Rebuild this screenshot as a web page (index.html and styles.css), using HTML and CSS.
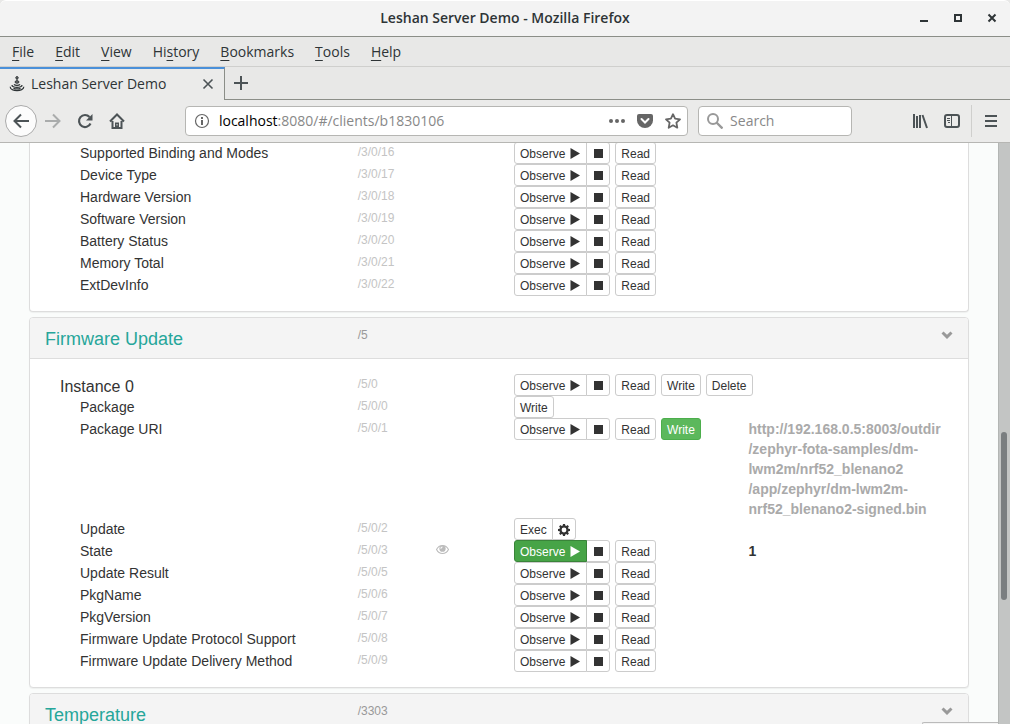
FILE: index.html
```html
<!DOCTYPE html>
<html lang="en">
<head>
<meta charset="utf-8">
<title>Leshan Server Demo</title>
<link rel="stylesheet" href="styles.css">
</head>
<body>
<svg class="sprite" aria-hidden="true">
  <symbol id="play" viewBox="0 0 12 12"><path d="M1.500 0L11 5.500L1.500 11Z"/></symbol>
  <symbol id="stop" viewBox="0 0 12 12"><path d="M2 1h9v9H2Z"/></symbol>
  <symbol id="cog" viewBox="0 0 12 12"><path fill-rule="evenodd" d="M5 0h2l.3 1.6 1 .4L9.600 1.100 10.900 2.400 10 3.700l.4 1L12 5v2l-1.600.3-.4 1 .9 1.300-1.300 1.300L8.300 10l-1 .4L7 12H5l-.3-1.600-1-.4-1.300.9-1.300-1.300L2 8.300l-.4-1L0 7V5l1.600-.3.4-1L1.100 2.400 2.400 1.100 3.700 2l1-.4ZM6 3.600a2.400 2.400 0 1 0 0 4.800 2.400 2.400 0 0 0 0-4.800Z"/></symbol>
  <symbol id="chevron" viewBox="0 0 12 12"><path d="M.5 5.500L2.500 3.500 6 6.800 9.500 3.500 11.500 5.500 6 11Z"/></symbol>
</svg>

<header class="chrome">
  <div class="titlebar">
    <span class="window-title">Leshan Server Demo - Mozilla Firefox</span>
    <div class="window-controls">
      <button aria-label="Minimize"><svg width="10" height="10"><path d="M1 7h8v2H1z"/></svg></button>
      <button aria-label="Maximize"><svg width="10" height="10"><path fill-rule="evenodd" d="M1 1h8v8H1zM3 3v4h4V3z"/></svg></button>
      <button aria-label="Close"><svg width="10" height="10"><path d="M1.500 1.500l7 7m0-7l-7 7" stroke="#2e3436" stroke-width="2"/></svg></button>
    </div>
  </div>
  <nav class="menubar">
    <button><u>F</u>ile</button><button><u>E</u>dit</button><button><u>V</u>iew</button><button>Hi<u>s</u>tory</button><button><u>B</u>ookmarks</button><button><u>T</u>ools</button><button><u>H</u>elp</button>
  </nav>
  <div class="tabs">
    <div class="tab">
      <svg class="favicon" width="16" height="16" viewBox="0 0 16 16" fill="none" stroke="#2e3436"><circle cx="8" cy="1.800" r="1.200" fill="#777"/><path d="M8 3v2"/><ellipse cx="8" cy="6" rx="2" ry="1.200" fill="#777"/><path d="M5 8.300c1 1.400 5 1.400 6 0M3 9c-.5 3.200 10.500 3.200 10 0M1.200 10.800c0 5 13.600 5 13.600 0M4.500 12.200c1.500 1 5.500 1 7 0" stroke-width="1.200"/></svg>
      <span class="tab-title">Leshan Server Demo</span>
      <button class="tab-close" aria-label="Close tab"><svg width="12" height="12"><path d="M1.500 1.500l9 9m0-9l-9 9" stroke="#4c5356" stroke-width="1.600"/></svg></button>
    </div>
    <button class="new-tab" aria-label="New tab"><svg width="14" height="14"><path d="M7 0v14M0 7h14" stroke="#4c5356" stroke-width="2"/></svg></button>
  </div>
  <div class="toolbar">
    <button class="back" aria-label="Back"><svg width="16" height="16" fill="none" stroke="#4c5356" stroke-width="2"><path d="M8 1.500L1.500 8 8 14.500M1.500 8H16"/></svg></button>
    <button class="tool" aria-label="Forward"><svg width="16" height="16" fill="none" stroke="#aaacac" stroke-width="2"><path d="M8 1.500L14.500 8 8 14.500M0 8h14.500"/></svg></button>
    <button class="tool" aria-label="Reload"><svg width="16" height="16" fill="none" stroke="#4c5356" stroke-width="2.200"><path d="M13.500 10.500A6 6 0 1 1 12.500 4"/><path d="M15.500 1v6.500H9z" fill="#4c5356" stroke="none"/></svg></button>
    <button class="tool" aria-label="Home"><svg width="16" height="16"><path d="M1 8.500L8 1.500l7 7M3.500 8v7h9V8" fill="none" stroke="#4c5356" stroke-width="2"/><path d="M6 15V9.500h4V15z" fill="#4c5356"/><path d="M8 11v1.500" stroke="#ddd"/></svg></button>
    <span class="spacer"></span>
    <div class="urlbar">
      <svg width="16" height="16"><circle cx="8" cy="8" r="6.500" fill="none" stroke="#666" stroke-width="1.200"/><path d="M7 7h2v5H7zM7 4h2v2H7z" fill="#666"/></svg>
      <a class="address" href="#/clients/b1830106"><b>localhost</b>:8080/#/clients/b1830106</a>
      <button aria-label="Page actions"><svg width="16" height="16" fill="#666"><circle cx="2" cy="8" r="2"/><circle cx="8" cy="8" r="2"/><circle cx="14" cy="8" r="2"/></svg></button>
      <button aria-label="Save to Pocket"><svg width="16" height="16"><path d="M2 1h12q2 0 2 2v4.500a8 7.500 0 0 1-16 0V3q0-2 2-2z" fill="#666"/><path d="M4.500 6L8 9.500 11.500 6" fill="none" stroke="#fff" stroke-width="2" stroke-linecap="round"/></svg></button>
      <button aria-label="Bookmark"><svg width="16" height="16"><path d="M8 1.200l2.100 4.500 4.900.6-3.600 3.400.9 5L8 12.300l-4.300 2.400.9-5L1 6.300l4.900-.6z" fill="none" stroke="#666" stroke-width="1.800" stroke-linejoin="round"/></svg></button>
    </div>
    <label class="search">
      <svg width="16" height="16" fill="none" stroke="#999" stroke-width="2"><circle cx="6" cy="6" r="5"/><path d="M9.500 9.500l6 6" stroke-width="2.400"/></svg>
      <input type="text" placeholder="Search" aria-label="Search">
    </label>
    <span class="spacer"></span>
    <button class="tool" aria-label="Library"><svg width="16" height="16" fill="none" stroke="#4c5356" stroke-width="2"><path d="M2 1v14M5 3v12M8 2v13M10.500 2l4.500 13"/></svg></button>
    <button class="tool" aria-label="Sidebars"><svg width="16" height="16" fill="none" stroke="#4c5356"><rect x="1" y="2" width="14" height="12" rx="2" stroke-width="2"/><path d="M7.500 2v12M3 5.500h3M3 7.500h3M4 9.500h2"/></svg></button>
    <button class="tool menu" aria-label="Open menu"><svg width="16" height="16" stroke="#4c5356" stroke-width="2"><path d="M2 3h12M2 8h12M2 13h12"/></svg></button>
  </div>
</header>

<div class="viewport">
  <main class="page">
    <section class="panel continued">
      <div class="panel-body">
        <div class="row"><span class="name">Supported Binding and Modes</span><span class="path">/3/0/16</span><span></span><div class="actions"><div class="group"><button class="btn">Observe <svg><use href="#play"/></svg></button><button class="btn" aria-label="Stop"><svg><use href="#stop"/></svg></button></div><button class="btn">Read</button></div></div>
        <div class="row"><span class="name">Device Type</span><span class="path">/3/0/17</span><span></span><div class="actions"><div class="group"><button class="btn">Observe <svg><use href="#play"/></svg></button><button class="btn" aria-label="Stop"><svg><use href="#stop"/></svg></button></div><button class="btn">Read</button></div></div>
        <div class="row"><span class="name">Hardware Version</span><span class="path">/3/0/18</span><span></span><div class="actions"><div class="group"><button class="btn">Observe <svg><use href="#play"/></svg></button><button class="btn" aria-label="Stop"><svg><use href="#stop"/></svg></button></div><button class="btn">Read</button></div></div>
        <div class="row"><span class="name">Software Version</span><span class="path">/3/0/19</span><span></span><div class="actions"><div class="group"><button class="btn">Observe <svg><use href="#play"/></svg></button><button class="btn" aria-label="Stop"><svg><use href="#stop"/></svg></button></div><button class="btn">Read</button></div></div>
        <div class="row"><span class="name">Battery Status</span><span class="path">/3/0/20</span><span></span><div class="actions"><div class="group"><button class="btn">Observe <svg><use href="#play"/></svg></button><button class="btn" aria-label="Stop"><svg><use href="#stop"/></svg></button></div><button class="btn">Read</button></div></div>
        <div class="row"><span class="name">Memory Total</span><span class="path">/3/0/21</span><span></span><div class="actions"><div class="group"><button class="btn">Observe <svg><use href="#play"/></svg></button><button class="btn" aria-label="Stop"><svg><use href="#stop"/></svg></button></div><button class="btn">Read</button></div></div>
        <div class="row"><span class="name">ExtDevInfo</span><span class="path">/3/0/22</span><span></span><div class="actions"><div class="group"><button class="btn">Observe <svg><use href="#play"/></svg></button><button class="btn" aria-label="Stop"><svg><use href="#stop"/></svg></button></div><button class="btn">Read</button></div></div>
      </div>
    </section>

    <section class="panel">
      <div class="panel-heading"><h2><a href="#firmware">Firmware Update</a></h2><span class="path">/5</span><button class="toggle" aria-label="Toggle"><svg><use href="#chevron"/></svg></button></div>
      <div class="panel-body" id="firmware">
        <div class="row"><span class="name instance">Instance 0</span><span class="path">/5/0</span><span></span><div class="actions"><div class="group"><button class="btn">Observe <svg><use href="#play"/></svg></button><button class="btn" aria-label="Stop"><svg><use href="#stop"/></svg></button></div><button class="btn">Read</button><button class="btn">Write</button><button class="btn">Delete</button></div></div>
        <div class="row"><span class="name">Package</span><span class="path">/5/0/0</span><span></span><div class="actions"><button class="btn">Write</button></div></div>
        <div class="row"><span class="name">Package URI</span><span class="path">/5/0/1</span><span></span><div class="actions"><div class="group"><button class="btn">Observe <svg><use href="#play"/></svg></button><button class="btn" aria-label="Stop"><svg><use href="#stop"/></svg></button></div><button class="btn">Read</button><button class="btn success">Write</button></div><span class="value muted">http://192.168.0.5:8003/outdir<wbr>/zephyr-fota-samples/dm-lwm2m/nrf52_blenano2<wbr>/app/zephyr/dm-lwm2m-nrf52_blenano2-signed.bin</span></div>
        <div class="row"><span class="name">Update</span><span class="path">/5/0/2</span><span></span><div class="actions"><div class="group"><button class="btn">Exec</button><button class="btn" aria-label="Exec parameters"><svg><use href="#cog"/></svg></button></div></div></div>
        <div class="row"><span class="name">State</span><span class="path">/5/0/3</span><span class="watch"><svg viewBox="0 0 12 12" fill="none" stroke="#bbb"><path d="M.5 6C3 1 9 1 11.500 6C9 11 3 11 .5 6Z"/><circle cx="6" cy="5.200" r="2.900" fill="#bbb" stroke="none"/><path d="M4.500 5.200Q4.500 3.700 6 3.700" stroke="#fff"/></svg></span><div class="actions"><div class="group"><button class="btn success active">Observe <svg><use href="#play"/></svg></button><button class="btn" aria-label="Stop"><svg><use href="#stop"/></svg></button></div><button class="btn">Read</button></div><span class="value">1</span></div>
        <div class="row"><span class="name">Update Result</span><span class="path">/5/0/5</span><span></span><div class="actions"><div class="group"><button class="btn">Observe <svg><use href="#play"/></svg></button><button class="btn" aria-label="Stop"><svg><use href="#stop"/></svg></button></div><button class="btn">Read</button></div></div>
        <div class="row"><span class="name">PkgName</span><span class="path">/5/0/6</span><span></span><div class="actions"><div class="group"><button class="btn">Observe <svg><use href="#play"/></svg></button><button class="btn" aria-label="Stop"><svg><use href="#stop"/></svg></button></div><button class="btn">Read</button></div></div>
        <div class="row"><span class="name">PkgVersion</span><span class="path">/5/0/7</span><span></span><div class="actions"><div class="group"><button class="btn">Observe <svg><use href="#play"/></svg></button><button class="btn" aria-label="Stop"><svg><use href="#stop"/></svg></button></div><button class="btn">Read</button></div></div>
        <div class="row"><span class="name">Firmware Update Protocol Support</span><span class="path">/5/0/8</span><span></span><div class="actions"><div class="group"><button class="btn">Observe <svg><use href="#play"/></svg></button><button class="btn" aria-label="Stop"><svg><use href="#stop"/></svg></button></div><button class="btn">Read</button></div></div>
        <div class="row"><span class="name">Firmware Update Delivery Method</span><span class="path">/5/0/9</span><span></span><div class="actions"><div class="group"><button class="btn">Observe <svg><use href="#play"/></svg></button><button class="btn" aria-label="Stop"><svg><use href="#stop"/></svg></button></div><button class="btn">Read</button></div></div>
      </div>
    </section>

    <section class="panel">
      <div class="panel-heading"><h2><a href="#temperature">Temperature</a></h2><span class="path">/3303</span><button class="toggle" aria-label="Toggle"><svg><use href="#chevron"/></svg></button></div>
    </section>
    <div class="status-popup"></div>
  </main>
  <div class="scrollbar"><div class="thumb"></div></div>
</div>
</body>
</html>
```
FILE: styles.css
```css
* { box-sizing: border-box; }

body {
  margin: 0;
  height: 100vh;
  display: flex;
  flex-direction: column;
  overflow: hidden;
  background: #fafcfb;
  color: #333;
  font: 14px/20px "Liberation Sans", Arial, sans-serif;
}

button {
  display: inline-flex;
  align-items: center;
  justify-content: center;
  margin: 0;
  padding: 0;
  border: 0;
  background: none;
  color: inherit;
  font: inherit;
}

svg { display: block; flex: none; }
.sprite { position: absolute; width: 0; height: 0; }

/* Browser window */
.chrome {
  position: relative;
  z-index: 1;
  flex: none;
  margin-bottom: -1px;
  border-bottom: 1px solid #b6b6b3;
  background: #e8e8e7;
  color: #2e3436;
  font-family: "Open Sans", "Noto Sans", sans-serif;
}

.titlebar {
  display: grid;
  grid-template-columns: 1fr auto 1fr;
  align-items: center;
  height: 37px;
  padding-bottom: 2px;
  border-top: 1px solid #fff;
  border-bottom: 1px solid #8b8e88;
  border-radius: 6px 6px 0 0;
  background: #f3f3f3;
}
.window-title { grid-column: 2; font-weight: 600; }
.window-controls {
  display: flex;
  justify-content: flex-end;
  gap: 24px;
  padding-right: 13px;
  fill: #2e3436;
}

.menubar {
  display: flex;
  gap: 21px;
  height: 30px;
  padding: 0 12px;
  border-bottom: 1px solid #cfcfcd;
}
.menubar button { display: block; }
.menubar u { text-underline-offset: 3px; }

.tabs {
  display: flex;
  height: 33px;
}
.tab {
  display: flex;
  align-items: center;
  width: 225px;
  padding: 0 10px 2px 9px;
  border-top: 2px solid #4a90d9;
  border-right: 1px solid #8b8e88;
  background: #ebebea;
}
.tab-title { flex: 1; margin-left: 6px; }
.new-tab {
  flex: 1;
  justify-content: flex-start;
  padding-left: 9px;
  border-bottom: 1px solid #8b8e88;
}

.toolbar {
  display: flex;
  align-items: center;
  height: 42px;
  padding: 0 0 0 5px;
  background: #ebebea;
}
.tool { width: 32px; height: 32px; }
.back {
  width: 32px;
  height: 32px;
  border: 1px solid #aaa;
  border-radius: 50%;
  background: #fcfcfc;
}
.menu {
  width: 39px;
  margin-left: 3px;
  border-left: 1px solid #cfcfcd;
}
.spacer { flex: 1; }
.urlbar, .search {
  display: flex;
  align-items: center;
  height: 30px;
  border: 1px solid #b6b6b3;
  border-radius: 4px;
  background: #fff;
}
.urlbar {
  flex: 10 1 24px;
  gap: 12px;
  margin-right: 10px;
  padding: 0 6px 0 8px;
}
.toolbar .spacer { flex: 1 1 4px; }
.address {
  flex: 1;
  margin-left: -3px;
  color: #888;
  text-decoration: none;
}
.address b { color: #000; font-weight: 400; }
.search { width: 154px; gap: 7px; padding: 0 8px; }
.search input {
  width: 100%;
  min-width: 0;
  padding: 0;
  border: 0;
  outline: 0;
  background: none;
  font: inherit;
}
.search input::placeholder { color: #888; opacity: 1; }

/* Page */
.viewport {
  display: flex;
  flex: 1;
  min-height: 0;
}
.page {
  position: relative;
  flex: 1;
  padding: 0 29px;
  overflow: hidden;
}
.scrollbar {
  width: 12px;
  padding: 290px 3px 0 2px;
  border-left: 1px solid #b3b6b4;
  background: #c3c5c4;
}
.thumb {
  height: 168px;
  border-radius: 3px;
  background: #7a7e80;
}

.panel {
  margin-bottom: 5px;
  border: 1px solid #ddd;
  border-radius: 4px;
  background: #fff;
  box-shadow: 0 1px 1px rgba(0, 0, 0, .05);
}
.continued {
  border-top: 0;
  border-radius: 0 0 4px 4px;
}
.continued .panel-body { padding-top: 0; }
.panel-body { padding: 15px 0; }

.row, .panel-heading {
  display: grid;
  grid-template-columns: 4fr 1fr 1fr 3fr 3fr;
}
.row > *, .panel-heading > * {
  min-width: 0;
  padding: 0 15px;
}
.panel-heading {
  height: 41px;
  padding-top: 10px;
  border-bottom: 1px solid #ddd;
  border-radius: 3px 3px 0 0;
  background: #f4f4f4;
}
.panel-heading h2 {
  margin: 0;
  font-size: 18px;
  font-weight: 400;
  line-height: 22px;
}
.panel-heading a { color: #26a69a; text-decoration: none; }
.panel-heading .path { color: #999; line-height: 14px; }
.toggle {
  grid-column: 5;
  align-self: start;
  justify-content: flex-end;
  fill: #999;
}
.toggle svg, .btn svg { width: 12px; height: 12px; }

.row > .name { padding-left: 50px; line-height: 22px; }
.row > .instance {
  height: 22px;
  padding-left: 30px;
  font-size: 16px;
  line-height: 26px;
}
.path { color: #c4c4c4; font-size: 12px; line-height: 20px; }
.watch svg { width: 13px; height: 13px; margin-top: 3px; }
.actions {
  display: flex;
  align-items: flex-start;
  gap: 5px;
}
.row > .value {
  margin-bottom: -1px;
  padding-top: 1px;
  font-weight: 700;
  overflow-wrap: break-word;
}
.muted { color: #aaa; }

.group { display: flex; }
.btn {
  gap: 4px;
  height: 22px;
  padding: 1px 5px 0;
  border: 1px solid #ccc;
  border-radius: 3px;
  background: #fff;
  font-size: 12px;
  line-height: 20px;
  fill: #333;
  white-space: nowrap;
}
.group .btn:first-child { border-radius: 3px 0 0 3px; }
.group .btn:last-child {
  margin-left: -1px;
  border-radius: 0 3px 3px 0;
}
.btn.success {
  border-color: #4cae4c;
  background: #5cb85c;
  color: #fff;
  fill: #fff;
}
.btn.active {
  position: relative;
  z-index: 1;
  border-color: #398439;
  background: #47a447;
}

.status-popup {
  position: absolute;
  right: 0;
  bottom: 0;
  width: 76px;
  height: 2px;
  border-top: 1px solid #bbb;
  border-left: 1px solid #bbb;
  border-top-left-radius: 3px;
  background: #f4f4f4;
}
```
